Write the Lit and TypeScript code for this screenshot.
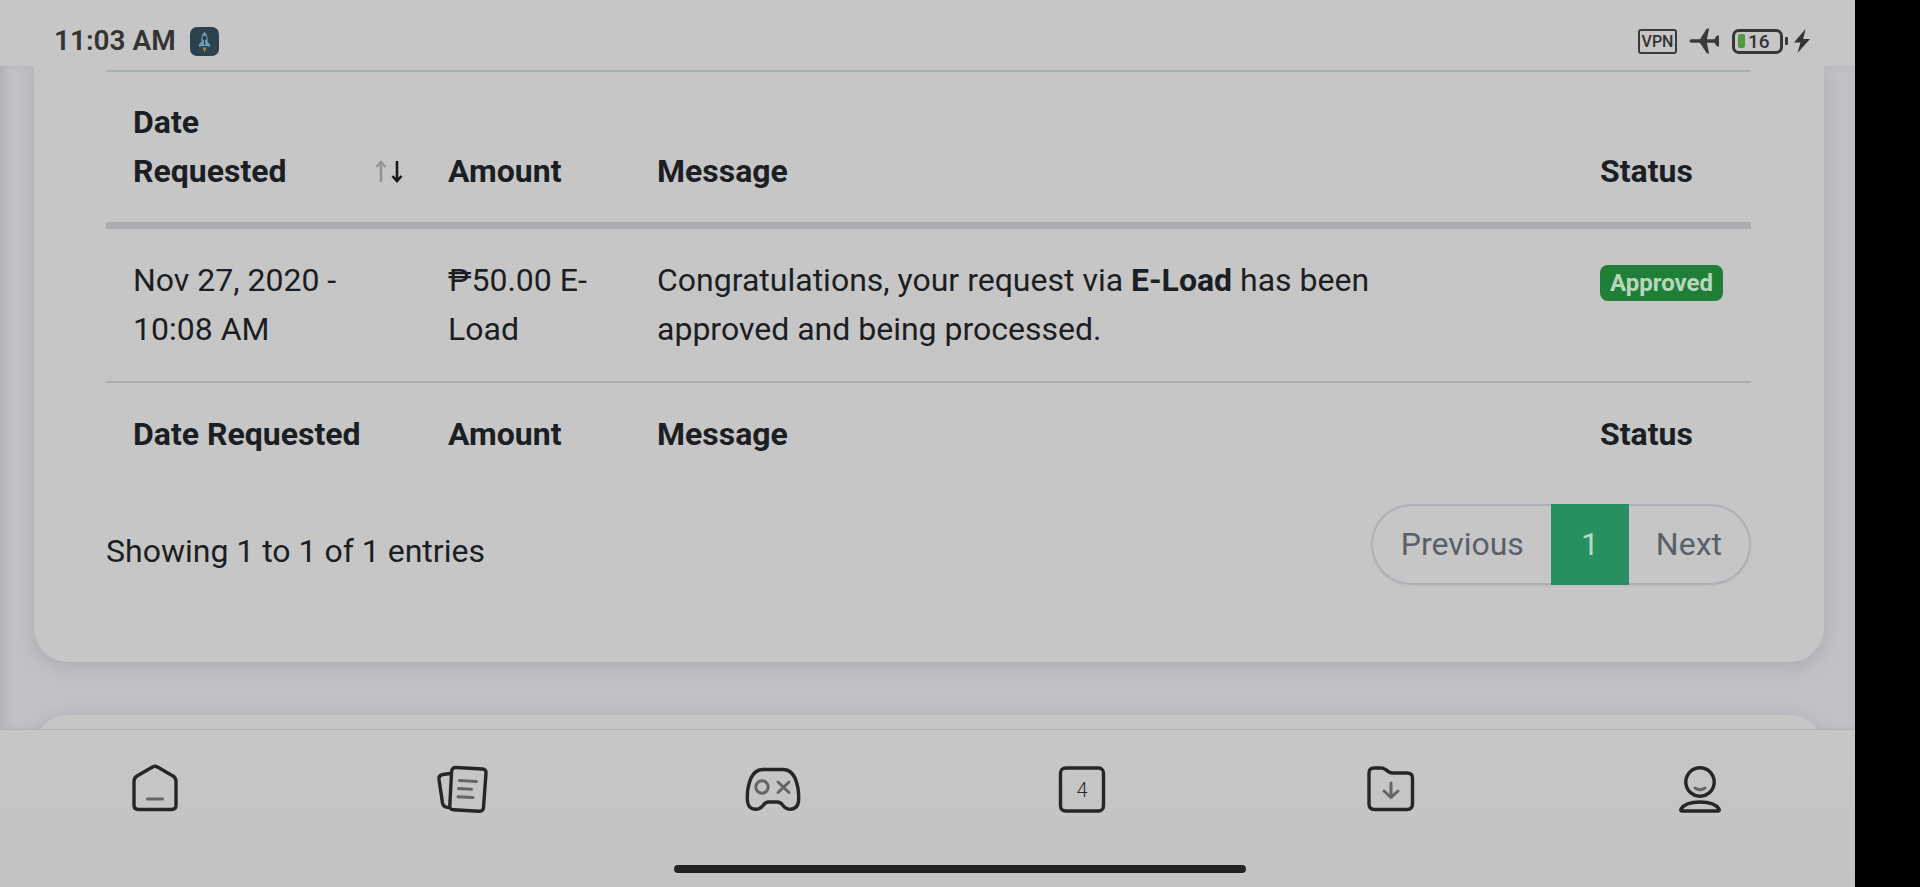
import { LitElement, html, css, svg } from "lit";
import { customElement, state } from "lit/decorators.js";

@customElement("status-bar")
class StatusBar extends LitElement {
  static styles = css`
    :host {
      display: flex;
      align-items: center;
      justify-content: space-between;
      height: 66px;
      padding: 16px 45px 0 54px;
      box-sizing: border-box;
      background: #c6c6c6;
      color: #343434;
    }
    .group {
      display: flex;
      align-items: center;
    }
    .left {
      gap: 14px;
    }
    .right {
      gap: 12px;
    }
    .time {
      font-size: 28px;
      line-height: 32px;
      font-weight: 600;
    }
    .vpn {
      box-sizing: border-box;
      width: 39px;
      height: 25px;
      border: 2px solid #3a3a3a;
      border-radius: 3px;
      font-size: 16px;
      line-height: 21px;
      font-weight: 500;
      text-align: center;
    }
    .power {
      display: flex;
      align-items: center;
      gap: 6px;
    }
    .battery {
      display: flex;
      align-items: center;
      gap: 2px;
    }
    .cell {
      box-sizing: border-box;
      display: flex;
      align-items: center;
      gap: 3px;
      width: 51px;
      height: 25px;
      padding: 0 3px;
      border: 3px solid #3a3638;
      border-radius: 7px;
      font-size: 19px;
      line-height: 19px;
      font-weight: 500;
    }
    .charge {
      width: 7px;
      height: 14px;
      border-radius: 2px;
      background: #4f9a3a;
    }
    .nub {
      width: 3px;
      height: 8px;
      border-radius: 1px;
      background: #3a3638;
    }
    svg {
      display: block;
    }
  `;

  render() {
    return html`
      <div class="group left">
        <span class="time">11:03 AM</span>
        <svg width="29" height="29" viewBox="0 0 29 29" aria-hidden="true">
          <rect width="29" height="29" rx="7" fill="#2c434e" />
          <path d="M14.500 5c-3 2.500-3.500 6-3 9.500l-2.500 3v2.500l3-1h5l3 1v-2.500l-2.500-3c.5-3.500 0-7-3-9.500z" fill="#6aa0bd" />
          <circle cx="14.500" cy="11" r="2.200" fill="#26404c" />
          <path d="M14.500 13v5" stroke="#26404c" stroke-width="1.200" />
          <path d="M12.500 20.500h4l-2 5z" fill="#a98a3a" />
        </svg>
      </div>
      <div class="group right">
        <span class="vpn">VPN</span>
        <svg width="31" height="26" viewBox="0 0 31 26" aria-label="Airplane mode">
          <path
            d="M2.500 11.300h8.500L17.500 1l2.700-.8-2.300 11.100h7.400l2.700-3.700h2v10.800h-2l-2.700-3.700h-7.400l2.300 11.100-2.700-.8L11 14.700H2.500c-2.600 0-2.600-3.400 0-3.400z"
            fill="#3a3a3a"
          />
        </svg>
        <div class="power">
          <div class="battery">
            <div class="cell"><span class="charge"></span><span>16</span></div>
            <span class="nub"></span>
          </div>
          <svg width="16" height="24" viewBox="0 0 16 24" aria-label="Charging">
            <path d="M11.500 0L0 13.500h6.500L3.500 24 16 10H9.200z" fill="#333" />
          </svg>
        </div>
      </div>
    `;
  }
}

@customElement("request-table")
class RequestTable extends LitElement {
  static styles = css`
    :host {
      display: block;
    }
    table {
      width: 100%;
      border-collapse: separate;
      border-spacing: 0;
      table-layout: fixed;
    }
    .col-date {
      width: 315px;
    }
    .col-amount {
      width: 209px;
    }
    .col-status {
      width: 178px;
    }
    th,
    td {
      padding: 27px;
      text-align: left;
      vertical-align: top;
      border-top: 2px solid #a9abad;
    }
    td {
      border-top: 0;
    }
    th {
      font-weight: 700;
    }
    thead th {
      vertical-align: bottom;
      padding: 26px 18px 26px 27px;
      border-bottom: 7px solid #acacb0;
      border-top-color: #a9b0b0;
    }
    .sort {
      display: flex;
      width: 100%;
      align-items: flex-end;
      justify-content: space-between;
      gap: 24px;
      padding: 0;
      border: 0;
      background: none;
      color: inherit;
      font: inherit;
      text-align: left;
      cursor: pointer;
    }
    .arrows {
      flex: none;
      display: block;
      padding-bottom: 13px;
    }
    .badge {
      display: inline-block;
      padding: 5px 10px;
      border-radius: 8px;
      background: #1f7f36;
      color: #b8d6be;
      font-size: 24px;
      line-height: 26px;
      font-weight: 700;
      vertical-align: middle;
    }
  `;

  @state() private ascending = false;

  render() {
    const up = this.ascending ? "#16181c" : "#929292";
    const down = this.ascending ? "#929292" : "#16181c";
    return html`
      <table>
        <colgroup>
          <col class="col-date" />
          <col class="col-amount" />
          <col />
          <col class="col-status" />
        </colgroup>
        <thead>
          <tr>
            <th scope="col" aria-sort=${this.ascending ? "ascending" : "descending"}>
              <button class="sort" @click=${() => (this.ascending = !this.ascending)}>
                <span>Date Requested</span>
                <svg class="arrows" width="28" height="24" viewBox="0 0 28 24" fill="none" aria-hidden="true">
                  <path d="M6 23V3M1.500 8L6 3l4.500 5" stroke=${up} stroke-width="2.500" />
                  <path d="M22 2v19M17.500 17l4.500 5 4.500-5" stroke=${down} stroke-width="2.600" />
                </svg>
              </button>
            </th>
            <th scope="col">Amount</th>
            <th scope="col">Message</th>
            <th scope="col">Status</th>
          </tr>
        </thead>
        <tbody>
          <tr>
            <td>Nov 27, 2020 - 10:08 AM</td>
            <td>₱50.00 E-Load</td>
            <td>
              Congratulations, your request via <b>E-Load</b> has been<br />
              approved and being processed.
            </td>
            <td><span class="badge">Approved</span></td>
          </tr>
        </tbody>
        <tfoot>
          <tr>
            <th>Date Requested</th>
            <th>Amount</th>
            <th>Message</th>
            <th>Status</th>
          </tr>
        </tfoot>
      </table>
    `;
  }
}

@customElement("table-pager")
class TablePager extends LitElement {
  static styles = css`
    :host {
      display: flex;
      align-items: flex-start;
      justify-content: space-between;
      margin-top: 18px;
    }
    .info {
      padding-top: 23px;
    }
    .pages {
      display: flex;
      border-radius: 41px;
      box-shadow: 0 1px 3px rgba(0, 0, 0, 0.05);
    }
    .page {
      box-sizing: border-box;
      height: 81px;
      padding: 0 27px;
      border: 2px solid #adb0b8;
      background: #c6c6c7;
      color: #5a6068;
      font: inherit;
      cursor: pointer;
    }
    .prev {
      padding-left: 28px;
      border-right: 0;
      border-radius: 41px 0 0 41px;
    }
    .next {
      border-left: 0;
      border-radius: 0 41px 41px 0;
    }
    .current {
      padding: 0 28px;
      border-color: #278f60;
      background: #278f60;
      color: #b4d8c6;
    }
  `;

  render() {
    return html`
      <div class="info">Showing 1 to 1 of 1 entries</div>
      <nav class="pages" aria-label="Pages">
        <button class="page prev">Previous</button>
        <button class="page current" aria-current="page">1</button>
        <button class="page next">Next</button>
      </nav>
    `;
  }
}

const icons = {
  Home: svg`
    <path d="M7 19.500Q7 16 10 14L25.500 5Q28 3.600 30.500 5L46 14Q49 16 49 19.500V43Q49 47.500 44.500 47.500H11.500Q7 47.500 7 43z" />
    <path class="soft" d="M20.500 37h15" />`,
  News: svg`
    <g transform="translate(-3 0)">
      <path d="M17 11.500L10 12.500Q5.500 13.200 6 17.500L9.500 41Q10.300 45.500 16 45.500" />
      <path d="M23 5.500L49.500 7Q53.300 7.200 53 11L50.500 45.500Q50.200 49.500 46 49.300L20.500 47.700Q16.500 47.500 16.800 43.500L18.600 9.500Q18.800 5.300 23 5.500z" />
      <path class="soft" d="M26.500 18.500l17 1M25.500 26.500l13 .8M25 34.800l15 .8" />
    </g>`,
  Games: svg`
    <path d="M18 7.500H38Q46 7.500 50 16Q54.500 27 53.500 39Q53 46.500 46 47.300Q41 47.500 38 43.500Q35.500 40 32.500 40H23.500Q20.500 40 18 43.500Q15 47.500 10 47.300Q3 46.500 2.500 39Q1.500 27 6 16Q10 7.500 18 7.500z" />
    <circle class="soft" cx="17" cy="25" r="6.200" />
    <path class="soft" d="M33 20l11 10.500M44 20L33 30.500" />`,
  Tabs: svg`<rect x="6.500" y="6" width="43" height="43" rx="5" />`,
  Downloads: svg`
    <path d="M6 11Q6 6 11 6H18Q20.500 6 22.500 7.500L26 10Q27.500 11 30 11H44Q49.500 11 49.500 16V42Q49.500 47.500 44 47.500H11.500Q6 47.500 6 42z" />
    <path class="soft" d="M28 21v14M21 29l7 6.500 7-6.500" />`,
  Profile: svg`
    <circle cx="28" cy="20" r="14.200" />
    <path d="M28 40C38 40 44.500 43 47 47Q48 49 45.500 49H10.500Q8 49 9 47C11.500 43 18 40 28 40z" />
    <path class="soft" d="M23 26Q28 29.500 33 26" />`,
};

@customElement("browser-nav")
class BrowserNav extends LitElement {
  static styles = css`
    :host {
      display: block;
      border-top: 1px solid #b2b2b2;
      background: linear-gradient(#c7c7c7, #c3c3c3);
    }
    .items {
      display: flex;
      padding: 32px 0 47px;
    }
    .item {
      flex: 1;
      display: grid;
      place-items: center;
      padding: 0;
      border: 0;
      background: none;
      color: #2a2a2a;
      font: inherit;
      cursor: pointer;
    }
    svg,
    .count {
      grid-area: 1 / 1;
    }
    svg {
      display: block;
      overflow: visible;
      fill: none;
      stroke: #262626;
      stroke-width: 3.4;
      stroke-linejoin: round;
      stroke-linecap: round;
    }
    .soft {
      stroke: #656565;
      stroke-width: 3;
    }
    .count {
      font-size: 20px;
      line-height: 24px;
      font-weight: 300;
    }
    /* The handle is centred on the whole display, cutout strip included. */
    .gesture {
      padding: 0 0 14px 65px;
    }
    .handle {
      width: 32%;
      height: 8px;
      margin: 0 auto;
      border-radius: 4px;
      background: #222;
    }
  `;

  render() {
    return html`
      <nav class="items" aria-label="Browser">
        ${Object.entries(icons).map(
          ([name, shape]) => html`
            <button class="item" aria-label=${name}>
              <svg width="56" height="56" viewBox="0 0 56 56" aria-hidden="true">${shape}</svg>
              ${name === "Tabs" ? html`<span class="count">4</span>` : ""}
            </button>
          `
        )}
      </nav>
      <div class="gesture"><div class="handle"></div></div>
    `;
  }
}

@customElement("app-root")
class AppRoot extends LitElement {
  static styles = css`
    :host {
      display: flex;
      flex-direction: column;
      box-sizing: border-box;
      height: 100vh;
      border-right: 65px solid #000;
      background: #c6c6c6;
      color: #1b1e23;
      font-family: Roboto, "Noto Sans", sans-serif;
      font-size: 32px;
      line-height: 49px;
    }
    .page {
      flex: 1;
      min-height: 0;
      overflow: hidden;
      padding: 0 31px 0 34px;
      background: #c1c0c6;
      box-shadow: inset 6px 0 12px -4px rgba(0, 0, 0, 0.12);
    }
    .card {
      padding: 4px 73px 77px 72px;
      border-radius: 0 0 34px 34px;
      background: #c6c6c6;
      box-shadow: 0 4px 18px rgba(0, 0, 0, 0.12);
    }
    .following {
      margin-top: 53px;
      border-radius: 34px 34px 0 0;
    }
  `;

  render() {
    return html`
      <status-bar></status-bar>
      <main class="page">
        <section class="card">
          <request-table></request-table>
          <table-pager></table-pager>
        </section>
        <section class="card following"></section>
      </main>
      <browser-nav></browser-nav>
    `;
  }
}
